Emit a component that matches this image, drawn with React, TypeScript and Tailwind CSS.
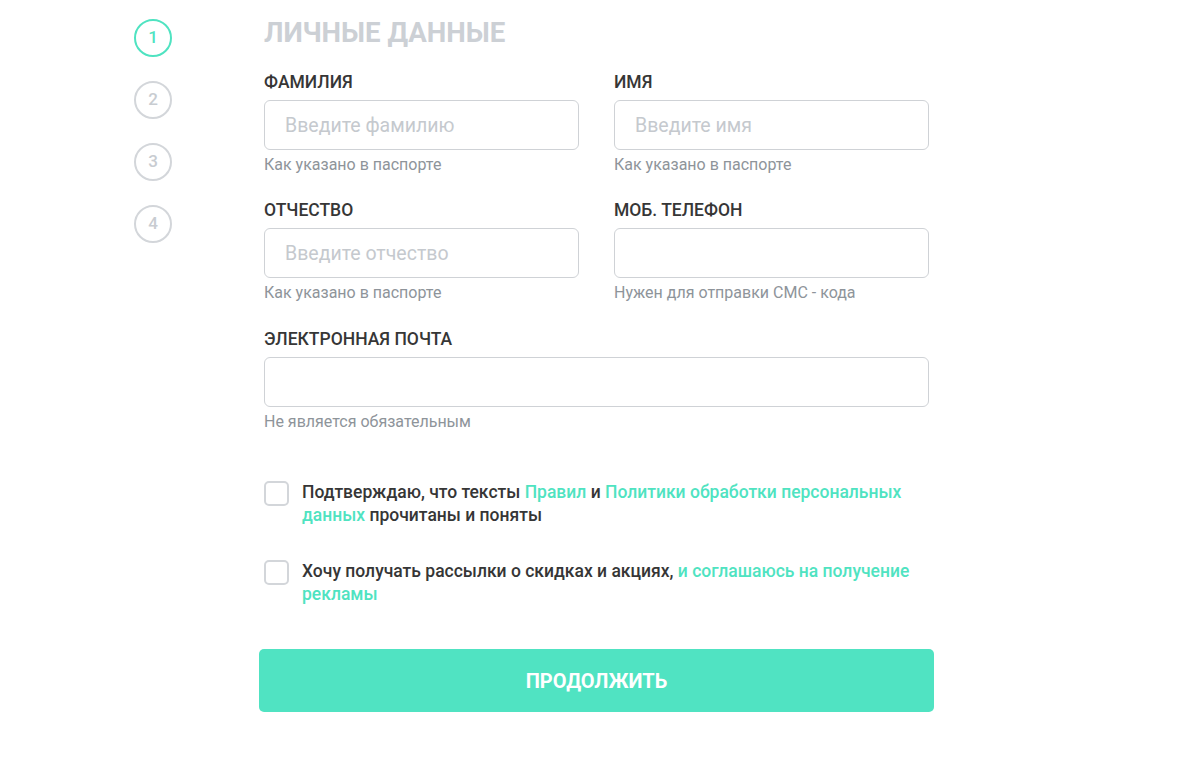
function Step({ n, active }: { n: number; active?: boolean }) {
  return (
    <div
      className={
        active
          ? "flex h-[38px] w-[38px] items-center justify-center rounded-full border-2 border-[#4fe3c1] text-[17px] font-medium text-[#4fe3c1]"
          : "flex h-[38px] w-[38px] items-center justify-center rounded-full border-2 border-[#d3d6da] text-[17px] font-medium text-[#c8ccd1]"
      }
    >
      {n}
    </div>
  );
}

function Field({
  label,
  placeholder,
  hint,
}: {
  label: string;
  placeholder?: string;
  hint: string;
}) {
  return (
    <div className="flex flex-col">
      <label className="text-[17.5px] font-medium uppercase leading-[20px] text-[#363636]">{label}</label>
      <input
        className="mt-[8px] h-[50px] w-full rounded-[6px] border border-[#cfd2d6] px-[20px] text-[19.5px] text-[#333] outline-none placeholder:text-[#c5c9ce]"
        placeholder={placeholder}
      />
      <span className="mt-[5px] text-[16px] leading-[20px] text-[#8e949a]">{hint}</span>
    </div>
  );
}

function Check({ children }: { children: React.ReactNode }) {
  return (
    <label className="flex items-start gap-[13px]">
      <span className="h-[25px] w-[25px] shrink-0 rounded-[5px] border-2 border-[#d3d6da] bg-white" />
      <span className="text-[17.5px] font-medium leading-[23px] text-[#363636]">{children}</span>
    </label>
  );
}

export default function App() {
  return (
    <div
      className="flex min-h-[761px] bg-white pl-[134px]"
      style={{ fontFamily: "Roboto, 'Noto Sans', sans-serif" }}
    >
      <div className="flex flex-col gap-[24px] pt-[19px]">
        <Step n={1} active />
        <Step n={2} />
        <Step n={3} />
        <Step n={4} />
      </div>

      <div className="ml-[92px] w-[665px] pt-[17px]">
        <h1 className="text-[27.6px] font-bold uppercase leading-[32px] text-[#ccd0d5]">Личные данные</h1>

        <div className="mt-[23px] grid grid-cols-2 gap-x-[35px] gap-y-[25px]">
          <Field label="Фамилия" placeholder="Введите фамилию" hint="Как указано в паспорте" />
          <Field label="Имя" placeholder="Введите имя" hint="Как указано в паспорте" />
          <Field label="Отчество" placeholder="Введите отчество" hint="Как указано в паспорте" />
          <Field label="Моб. телефон" hint="Нужен для отправки СМС - кода" />
          <div className="col-span-2 pt-[1px]">
            <Field label="Электронная почта" hint="Не является обязательным" />
          </div>
        </div>

        <div className="mt-[49px] flex flex-col gap-[33px]">
          <Check>
            Подтверждаю, что тексты <span className="text-[#4fe3c1]">Правил</span> и{" "}
            <span className="text-[#4fe3c1]">Политики обработки персональных данных</span> прочитаны и поняты
          </Check>
          <Check>
            Хочу получать рассылки о скидках и акциях,{" "}
            <span className="text-[#4fe3c1]">и соглашаюсь на получение рекламы</span>
          </Check>
        </div>

        <button className="-mx-[5px] mt-[43px] flex h-[63px] w-[675px] items-center justify-center rounded-[5px] bg-[#50e3c2] text-[20px] font-bold uppercase text-white">
          Продолжить
        </button>
      </div>
    </div>
  );
}
